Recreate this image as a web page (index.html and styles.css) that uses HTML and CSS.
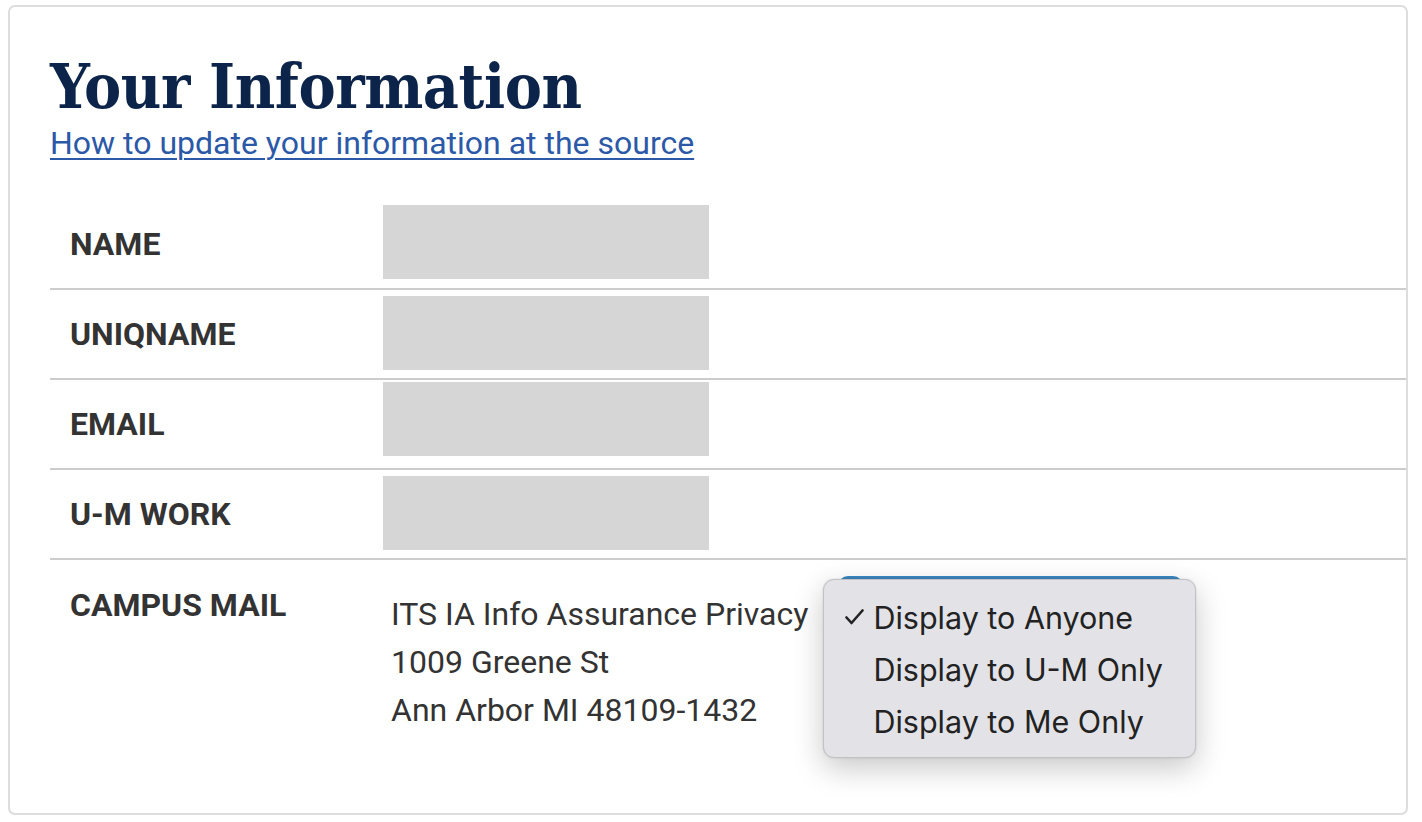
FILE: index.html
```html
<!DOCTYPE html>
<html lang="en">
<head>
<meta charset="utf-8">
<title>Your Information</title>
<link rel="stylesheet" href="styles.css">
</head>
<body>
<div class="card">
  <h1 class="title">Your Information</h1>
  <a class="source-link" href="#">How to update your information at the source</a>
  <div class="info-table">
    <div class="row">
      <div class="label">NAME</div>
      <div class="value"><div class="redact r1"></div></div>
    </div>
    <div class="row">
      <div class="label">UNIQNAME</div>
      <div class="value"><div class="redact r2"></div></div>
    </div>
    <div class="row">
      <div class="label">EMAIL</div>
      <div class="value"><div class="redact r3"></div></div>
    </div>
    <div class="row">
      <div class="label">U-M WORK</div>
      <div class="value"><div class="redact r4"></div></div>
    </div>
    <div class="row row-mail">
      <div class="label">CAMPUS MAIL</div>
      <div class="value mail">
        <div class="address">
          <div>ITS IA Info Assurance Privacy</div>
          <div>1009 Greene St</div>
          <div>Ann Arbor MI 48109-1432</div>
        </div>
        <div class="select-wrap">
          <div class="select-btn"></div>
          <ul class="menu">
            <li class="opt checked"><span class="check"><svg width="19" height="16" viewBox="0 0 19 16"><polyline points="1.5,8.5 6.5,14 17.5,1.5" fill="none" stroke="#222" stroke-width="2.6" stroke-linecap="round" stroke-linejoin="round"/></svg></span>Display to Anyone</li>
            <li class="opt"><span class="check"></span>Display to U-M Only</li>
            <li class="opt"><span class="check"></span>Display to Me Only</li>
          </ul>
        </div>
      </div>
    </div>
  </div>
</div>
</body>
</html>
```
FILE: styles.css
```css
html, body {
  margin: 0;
  padding: 0;
  background: #ffffff;
}
body {
  font-family: Roboto, "Liberation Sans", sans-serif;
  color: #333333;
}
.card {
  margin: 5px 0 0 8px;
  height: 806px;
  width: 1356px;
  border: 2px solid #dddddd;
  border-radius: 7px;
  padding: 0 0 0 40px;
  box-sizing: content-box;
}
.title {
  margin: 0;
  padding-top: 44px;
  font-family: "DejaVu Serif Condensed", "DejaVu Serif", serif;
  font-stretch: condensed;
  font-weight: 700;
  font-size: 62px;
  line-height: 72px;
  color: #0c2449;
  letter-spacing: -0.4px;
}
.source-link {
  display: inline-block;
  font-family: Roboto, sans-serif;
  font-size: 32px;
  line-height: 40px;
  color: #2b59a8;
  text-decoration: underline;
  text-decoration-thickness: 2px;
  text-underline-offset: 4px;
}
.info-table {
  margin-top: 37px;
}
.row {
  display: flex;
  height: 88px;
  border-bottom: 2px solid #cccccc;
}
.row-mail {
  border-bottom: none;
  height: auto;
}
.label {
  width: 313px;
  padding-left: 20px;
  display: flex;
  align-items: center;
  font-family: Roboto, sans-serif;
  font-weight: 700;
  font-size: 32px;
  color: #333333;
}
.row-mail .label {
  align-items: flex-start;
  padding-top: 25px;
  line-height: 40px;
}
.value {
  flex: 1;
}
.redact {
  width: 326px;
  height: 74px;
  background: #d6d6d6;
}
.r1 { margin-top: 5px; }
.r2 { margin-top: 6px; }
.r3 { margin-top: 2px; }
.r4 { margin-top: 6px; }
.mail {
  display: flex;
  align-items: flex-start;
  padding-top: 16px;
}
.address {
  padding-left: 8px;
  padding-top: 14px;
  font-family: Roboto, sans-serif;
  font-size: 32px;
  line-height: 48px;
  color: #333333;
}
.select-wrap {
  position: relative;
  margin-left: 30px;
  width: 345px;
}
.select-btn {
  height: 40px;
  background: #3a87c0;
  border-radius: 10px 10px 6px 6px;
}
.menu {
  position: absolute;
  left: -15px;
  top: 3px;
  margin: 0;
  padding: 11px 0 10px 0;
  list-style: none;
  width: 371px;
  background: #e3e3e7;
  border: 1px solid #c2c2c6;
  border-radius: 11px;
  box-shadow: 0 10px 30px rgba(0, 0, 0, 0.22), 0 0 2px rgba(0, 0, 0, 0.15);
}
.opt {
  display: flex;
  align-items: center;
  height: 52px;
  font-family: Inter, "Noto Sans", sans-serif;
  font-size: 30.5px;
  color: #222222;
}
.check {
  display: flex;
  align-items: center;
  width: 28px;
  padding-left: 21px;
}
```
